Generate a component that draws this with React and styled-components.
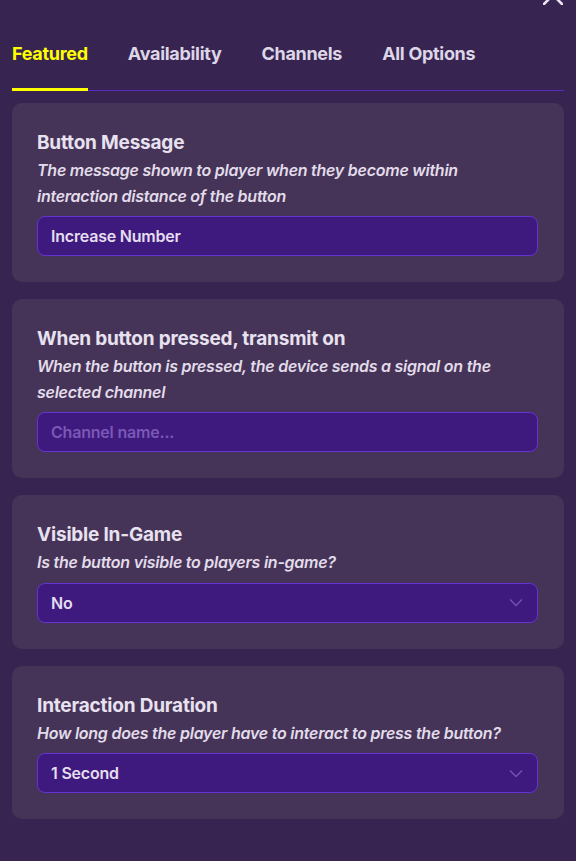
import styled, { createGlobalStyle } from "styled-components";

const GlobalStyle = createGlobalStyle`
  html, body {
    margin: 0;
    padding: 0;
    background: #372451;
  }
  body {
    font-family: Inter, "Noto Sans", sans-serif;
    color: #e8e2f0;
  }
`;

const Page = styled.div`
  position: relative;
  width: 576px;
  height: 861px;
  box-sizing: border-box;
  padding: 43px 12px 0 12px;
  background: #372451;
  overflow: hidden;
`;

const CloseButton = styled.button`
  position: absolute;
  top: -15px;
  right: 13px;
  width: 20px;
  height: 20px;
  padding: 0;
  border: 0;
  background: none;
  color: #e9e4f0;
`;

const TabBar = styled.div`
  display: flex;
  gap: 40px;
  border-bottom: 1px solid #5a2bc4;
`;

const Tab = styled.div`
  font-size: 18px;
  line-height: 22px;
  font-weight: 700;
  letter-spacing: -0.3px;
  padding-bottom: 23px;
  margin-bottom: -1px;
  color: ${(p) => (p.$active ? "#ffff00" : "#dcd6e6")};
  border-bottom: 3px solid ${(p) => (p.$active ? "#ffff00" : "transparent")};
`;

const CardList = styled.div`
  display: flex;
  flex-direction: column;
  gap: 17px;
  margin-top: 12px;
`;

const Card = styled.section`
  background: #463458;
  border-radius: 10px;
  padding: 25px 26px 26px 25px;
  display: flex;
  flex-direction: column;
`;

const Title = styled.h3`
  margin: 0;
  font-size: 19px;
  line-height: 30px;
  font-weight: 700;
  letter-spacing: -0.2px;
  color: #e8e2f0;
`;

const Description = styled.p`
  margin: 0 0 7px 0;
  font-size: 16px;
  line-height: 25.5px;
  font-style: italic;
  font-weight: 600;
  letter-spacing: -0.25px;
  color: #e2dcea;
`;

const Field = styled.div`
  height: 40px;
  box-sizing: border-box;
  display: flex;
  align-items: center;
  justify-content: space-between;
  padding: 0 14px 0 13px;
  background: #3f1a7e;
  border: 1px solid #6533d2;
  border-radius: 8px;
  font-size: 16px;
  font-weight: 600;
  letter-spacing: -0.2px;
  color: ${(p) => (p.$placeholder ? "#7a58b6" : "#e4def0")};
`;

const Chevron = () => (
  <svg width="14" height="9" viewBox="0 0 14 9" fill="none">
    <path d="M1 1.5 L7 7.5 L13 1.5" stroke="#7552b8" strokeWidth="1.3" />
  </svg>
);

const fields = [
  {
    title: "Button Message",
    desc: "The message shown to player when they become within interaction distance of the button",
    value: "Increase Number",
  },
  {
    title: "When button pressed, transmit on",
    desc: "When the button is pressed, the device sends a signal on the selected channel",
    value: "Channel name...",
    placeholder: true,
  },
  {
    title: "Visible In-Game",
    desc: "Is the button visible to players in-game?",
    value: "No",
    select: true,
  },
  {
    title: "Interaction Duration",
    desc: "How long does the player have to interact to press the button?",
    value: "1 Second",
    select: true,
  },
];

export default function App() {
  return (
    <>
      <GlobalStyle />
      <Page>
        <CloseButton aria-label="Close">
          <svg width="20" height="20" viewBox="0 0 20 20">
            <path
              d="M1 1 L19 19 M19 1 L1 19"
              stroke="currentColor"
              strokeWidth="2.6"
              strokeLinecap="round"
            />
          </svg>
        </CloseButton>
        <TabBar>
          <Tab $active>Featured</Tab>
          <Tab>Availability</Tab>
          <Tab>Channels</Tab>
          <Tab>All Options</Tab>
        </TabBar>
        <CardList>
          {fields.map((f) => (
            <Card key={f.title}>
              <Title>{f.title}</Title>
              <Description>{f.desc}</Description>
              <Field $placeholder={f.placeholder}>
                <span>{f.value}</span>
                {f.select && <Chevron />}
              </Field>
            </Card>
          ))}
        </CardList>
      </Page>
    </>
  );
}
